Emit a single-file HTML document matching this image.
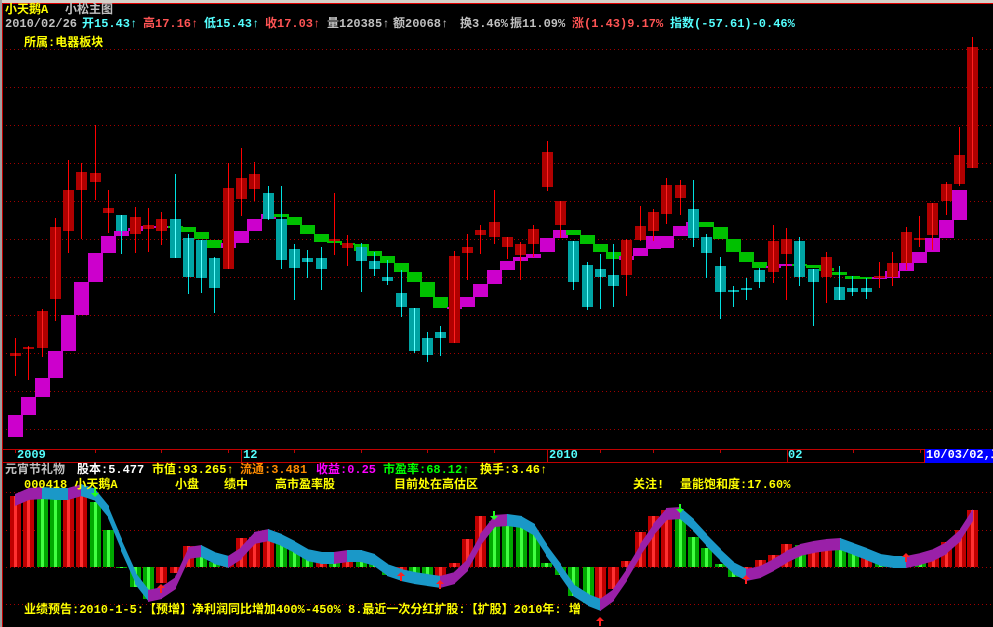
<!DOCTYPE html>
<html><head><meta charset="utf-8">
<style>
html,body{margin:0;padding:0;background:#000;}
#w{position:relative;width:993px;height:627px;overflow:hidden;background:#000;font:bold 12px/13px "Liberation Mono","WenQuanYi Zen Hei","Noto Sans CJK SC",monospace;}
svg{position:absolute;left:0;top:0;}
.t{position:absolute;white-space:pre;}
.y{color:#ffff00}.g{color:#c0c0c0}.c{color:#54ffff}.r{color:#ff5454}.w{color:#fff}.o{color:#ff8c00}.m{color:#ff00ff}.gr{color:#00ff00}
</style></head><body><div id="w">
<svg id="s" width="993" height="627" xmlns="http://www.w3.org/2000/svg"></svg>
<div class="t y" style="left:5px;top:4px">小天鹅A</div>
<div class="t g" style="left:65px;top:4px">小松主图</div>
<div class="t g" style="left:5px;top:18px">2010/02/26</div>
<div class="t c" style="left:82px;top:18px">开15.43↑</div>
<div class="t r" style="left:143px;top:18px">高17.16↑</div>
<div class="t c" style="left:204px;top:18px">低15.43↑</div>
<div class="t r" style="left:265px;top:18px">收17.03↑</div>
<div class="t g" style="left:327px;top:18px">量120385↑</div>
<div class="t g" style="left:393px;top:18px">额20068↑</div>
<div class="t g" style="left:460px;top:18px">换3.46%</div>
<div class="t g" style="left:510px;top:18px">振11.09%</div>
<div class="t r" style="left:572px;top:18px">涨(1.43)9.17%</div>
<div class="t c" style="left:670px;top:18px">指数(-57.61)-0.46%</div>
<div class="t y" style="left:24px;top:37px">所属:电器板块</div>
<div class="t c" style="left:17px;top:449px">2009</div>
<div class="t c" style="left:243px;top:449px">12</div>
<div class="t c" style="left:549px;top:449px">2010</div>
<div class="t c" style="left:788px;top:449px">02</div>
<div class="t w" style="left:926px;top:449px">10/03/02,二</div>
<div class="t g" style="left:5px;top:464px">元宵节礼物</div>
<div class="t w" style="left:77px;top:464px">股本:5.477</div>
<div class="t y" style="left:152px;top:464px">市值:93.265↑</div>
<div class="t o" style="left:240px;top:464px">流通:3.481</div>
<div class="t m" style="left:316px;top:464px">收益:0.25</div>
<div class="t gr" style="left:383px;top:464px">市盈率:68.12↑</div>
<div class="t y" style="left:480px;top:464px">换手:3.46↑</div>
<div class="t y" style="left:24px;top:479px">000418 小天鹅A</div>
<div class="t y" style="left:175px;top:479px">小盘</div>
<div class="t y" style="left:224px;top:479px">绩中</div>
<div class="t y" style="left:275px;top:479px">高市盈率股</div>
<div class="t y" style="left:394px;top:479px">目前处在高估区</div>
<div class="t y" style="left:633px;top:479px">关注!</div>
<div class="t y" style="left:680px;top:479px">量能饱和度:17.60%</div>
<div class="t y" style="left:24px;top:604px">业绩预告:2010-1-5:【预增】净利润同比增加400%-450% 8.最近一次分红扩股:【扩股】2010年: 增</div>
</div>
<script>
var s=document.getElementById('s'),h='';
function R(x,y,w,hh,f){h+='<rect x="'+x+'" y="'+y+'" width="'+w+'" height="'+hh+'" fill="'+f+'"/>';}
function L(x1,y1,x2,y2,c,sw,da){h+='<line x1="'+x1+'" y1="'+y1+'" x2="'+x2+'" y2="'+y2+'" stroke="'+c+'" stroke-width="'+(sw||1)+'"'+(da?' stroke-dasharray="'+da+'"':'')+'/>';}
R(0,0,993,3,'#d4d0c8');R(0,3,993,1,'#e00000');
R(0,0,2,627,'#a0a0a0');R(2,3,1,624,'#c00000');
[49,87,125,163,201,239,277,315,353,391,429].forEach(function(y){L(6,y+.5,993,y+.5,'#a00000',1,'1 3');});
[492,530,567,604].forEach(function(y){L(6,y+.5,993,y+.5,'#a00000',1,'1 3');});
L(3,449.5,993,449.5,'#c00000');L(3,462.5,993,462.5,'#c00000');
[15,95,161,228,294,361,427,494,547,600,653,720,787,853,920].forEach(function(x){L(x+.5,449,x+.5,453,'#c00000');});
[241,547,787].forEach(function(x){L(x+.5,449,x+.5,462,'#c00000');});
R(924,449,69,14,'#0000ff');R(924,449,1,14,'#e00000');
var st=[[15,415,437,'m'],[28,397,415,'m'],[42,378,397,'m'],[55,351,378,'m'],[68,315,351,'m'],[81,282,315,'m'],[95,253,282,'m'],[108,236,253,'m'],[121,231,236,'m'],[135,228,231,'m'],[148,226,228,'m'],[161,226,228,'m'],[175,226,228,'g'],[188,227,232,'g'],[201,232,239,'g'],[214,240,248,'g'],[228,243,248,'m'],[241,231,243,'m'],[254,219,231,'m'],[268,214,219,'m'],[281,214,217,'g'],[294,217,225,'g'],[307,225,234,'g'],[321,234,242,'g'],[334,241,243,'g'],[347,243,245,'g'],[361,244,251,'g'],[374,251,256,'g'],[387,256,263,'g'],[401,263,272,'g'],[414,272,282,'g'],[427,282,297,'g'],[440,297,308,'g'],[454,307,309,'m'],[467,297,307,'m'],[480,284,297,'m'],[494,270,284,'m'],[507,261,270,'m'],[520,257,261,'m'],[533,254,258,'m'],[547,238,252,'m'],[560,230,238,'m'],[573,230,235,'g'],[587,235,244,'g'],[600,244,252,'g'],[613,252,259,'g'],[626,256,260,'m'],[640,248,256,'m'],[653,236,249,'m'],[666,236,248,'m'],[680,226,236,'m'],[693,222,226,'m'],[706,222,227,'g'],[720,227,239,'g'],[733,239,252,'g'],[746,252,262,'g'],[759,262,268,'g'],[773,266,268,'m'],[786,264,266,'m'],[799,264,266,'g'],[813,265,268,'g'],[826,268,271,'g'],[839,272,275,'g'],[852,276,279,'g'],[866,277,279,'g'],[879,277,279,'m'],[892,271,278,'m'],[906,263,271,'m'],[919,252,263,'m'],[932,238,252,'m'],[946,220,238,'m'],[959,190,220,'m']];
st.forEach(function(a){R(a[0]-7,a[1],15,Math.max(2,a[2]-a[1]),a[3]=='m'?'#cc00cc':'#00c000');});
var c=[[15,353,356,338,376,'r'],[28,347,349,346,380,'r'],[42,311,348,309,357,'r'],[55,227,299,218,321,'r'],[68,190,231,160,253,'r'],[81,172,190,163,239,'r'],[95,173,182,125,200,'r'],[108,208,213,190,233,'r'],[121,215,231,215,254,'c'],[135,217,234,207,253,'r'],[148,225,229,208,252,'r'],[161,219,231,212,245,'r'],[175,219,258,174,258,'c'],[188,238,277,234,294,'c'],[201,240,278,240,293,'c'],[214,258,288,257,313,'c'],[228,188,269,163,269,'r'],[241,178,199,148,216,'r'],[254,174,189,162,201,'r'],[268,193,219,186,220,'c'],[281,219,260,186,269,'c'],[294,249,268,244,300,'c'],[307,258,262,250,278,'c'],[321,258,269,247,290,'c'],[334,239,241,193,255,'r'],[347,243,248,235,266,'r'],[361,247,261,243,292,'c'],[374,261,269,252,276,'c'],[387,277,281,260,285,'c'],[401,293,307,270,317,'c'],[414,308,351,308,353,'c'],[427,338,355,332,362,'c'],[440,332,338,326,356,'c'],[454,256,343,251,343,'r'],[467,247,253,234,280,'r'],[480,230,235,225,254,'r'],[494,222,237,190,244,'r'],[507,237,247,237,259,'r'],[520,244,255,242,280,'r'],[533,229,244,225,257,'r'],[547,152,187,141,191,'r'],[560,201,225,201,238,'r'],[573,241,282,241,290,'c'],[587,265,307,262,310,'c'],[600,269,277,254,309,'c'],[613,275,286,244,307,'c'],[626,240,275,239,296,'r'],[640,226,240,206,241,'r'],[653,212,231,209,241,'r'],[666,185,214,178,224,'r'],[680,185,198,180,215,'r'],[693,209,238,180,247,'c'],[706,237,253,234,278,'c'],[720,266,292,257,319,'c'],[733,290,292,286,307,'c'],[746,288,290,278,300,'c'],[759,270,282,268,288,'c'],[773,241,272,225,283,'r'],[786,239,254,228,300,'r'],[799,241,277,237,286,'c'],[813,269,282,269,326,'c'],[826,257,277,252,303,'r'],[839,287,300,266,300,'c'],[852,288,292,276,296,'c'],[866,288,292,278,299,'c'],[879,276,278,262,288,'r'],[892,263,277,252,286,'r'],[906,232,263,227,270,'r'],[919,238,240,216,247,'r'],[932,203,235,203,250,'r'],[946,184,201,182,215,'r'],[959,155,184,127,186,'r'],[972,47,168,37,168,'r']];
c.forEach(function(a){var x=a[0],red=a[5]=='r';
 L(x+.5,a[3],x+.5,a[4],red?'#ff0000':'#00e0e0');
 R(x-5,a[1],11,Math.max(2,a[2]-a[1]),red?'#b00000':'#00a4a4');
 L(x+.5,a[1],x+.5,a[1]+Math.max(2,a[2]-a[1]),red?'#ff2020':'#60ffff');});
var b=[[15,496],[28,494],[42,494,1],[55,495,1],[68,494],[81,491],[95,502,1],[108,530,1],[121,568,1],[135,587,1],[148,599,1],[161,583],[175,573],[188,546],[201,553,1],[214,562,1],[228,562],[241,538],[254,537],[268,532],[281,540,1],[294,548,1],[307,557,1],[321,555],[334,561,1],[347,554],[361,556,1],[374,564,1],[387,575,1],[401,573],[414,575,1],[427,582,1],[440,578],[454,563],[467,539],[480,516],[494,521,1],[507,521,1],[521,524,1],[534,533,1],[546,563,1],[560,575,1],[573,596,1],[588,603,1],[600,605],[613,589],[626,561],[640,532],[653,516],[666,510],[680,515,1],[693,537,1],[706,548,1],[720,564,1],[733,577,1],[746,575],[760,560],[773,555],[786,544],[800,545,1],[813,543],[826,541],[840,545,1],[853,552,1],[866,552],[880,560,1],[893,563,1],[906,561],[920,557,1],[933,553],[946,542],[960,530],[972,510]];
var z=567;
b.forEach(function(a){var x=a[0],y=a[1],g=a[2];var t=Math.min(y,z),hh=Math.abs(y-z)||1;
 R(x-5,t,11,hh,g?'#00a800':'#c00000');R(x-1,t,3,hh,g?'#40ff40':'#ff3030');});
var p=[[15,500],[28,494],[42,493],[55,494],[68,494],[81,490],[95,495],[108,512],[121,545],[135,578],[148,596],[161,593],[175,583],[188,553],[201,551],[214,558],[228,562],[241,553],[254,538],[268,535],[281,540],[294,547],[307,555],[321,558],[334,558],[347,556],[361,556],[374,560],[387,570],[401,575],[414,578],[427,580],[440,582],[454,578],[467,565],[480,540],[494,521],[507,520],[521,522],[534,530],[546,550],[560,570],[573,590],[588,600],[600,605],[613,595],[626,575],[640,550],[653,530],[666,514],[680,513],[693,525],[706,540],[720,555],[733,568],[746,575],[760,572],[773,565],[786,557],[800,550],[813,547],[826,545],[840,544],[853,549],[866,554],[880,560],[893,562],[906,562],[920,559],[933,555],[946,548],[960,535],[972,515]];
for(var i=1;i<p.length;i++){var up=p[i][1]<p[i-1][1];
 h+='<polygon points="'+p[i-1][0]+','+(p[i-1][1]-6)+' '+(p[i][0]+1)+','+(p[i][1]-6)+' '+(p[i][0]+1)+','+(p[i][1]+6)+' '+p[i-1][0]+','+(p[i-1][1]+6)+'" fill="'+(up?'#9a20a8':'#1a98c8')+'"/>';}
function A(x,y,up,col){if(up){h+='<polygon points="'+(x-4)+','+(y+4)+' '+x+','+y+' '+(x+4)+','+(y+4)+'" fill="'+col+'"/>';R(x-1,y+3,2,6,col);}
 else{R(x-1,y,2,6,col);h+='<polygon points="'+(x-4)+','+(y+5)+' '+x+','+(y+9)+' '+(x+4)+','+(y+5)+'" fill="'+col+'"/>';}}
A(95,488,0,'#20ff20');A(494,511,0,'#20ff20');A(680,504,0,'#20ff20');
A(161,584,1,'#ff2020');A(401,572,1,'#ff2020');A(440,580,1,'#ff2020');A(746,575,1,'#ff2020');A(906,553,1,'#ff2020');A(600,617,1,'#ff2020');
s.innerHTML=h;
</script>
</body></html>
